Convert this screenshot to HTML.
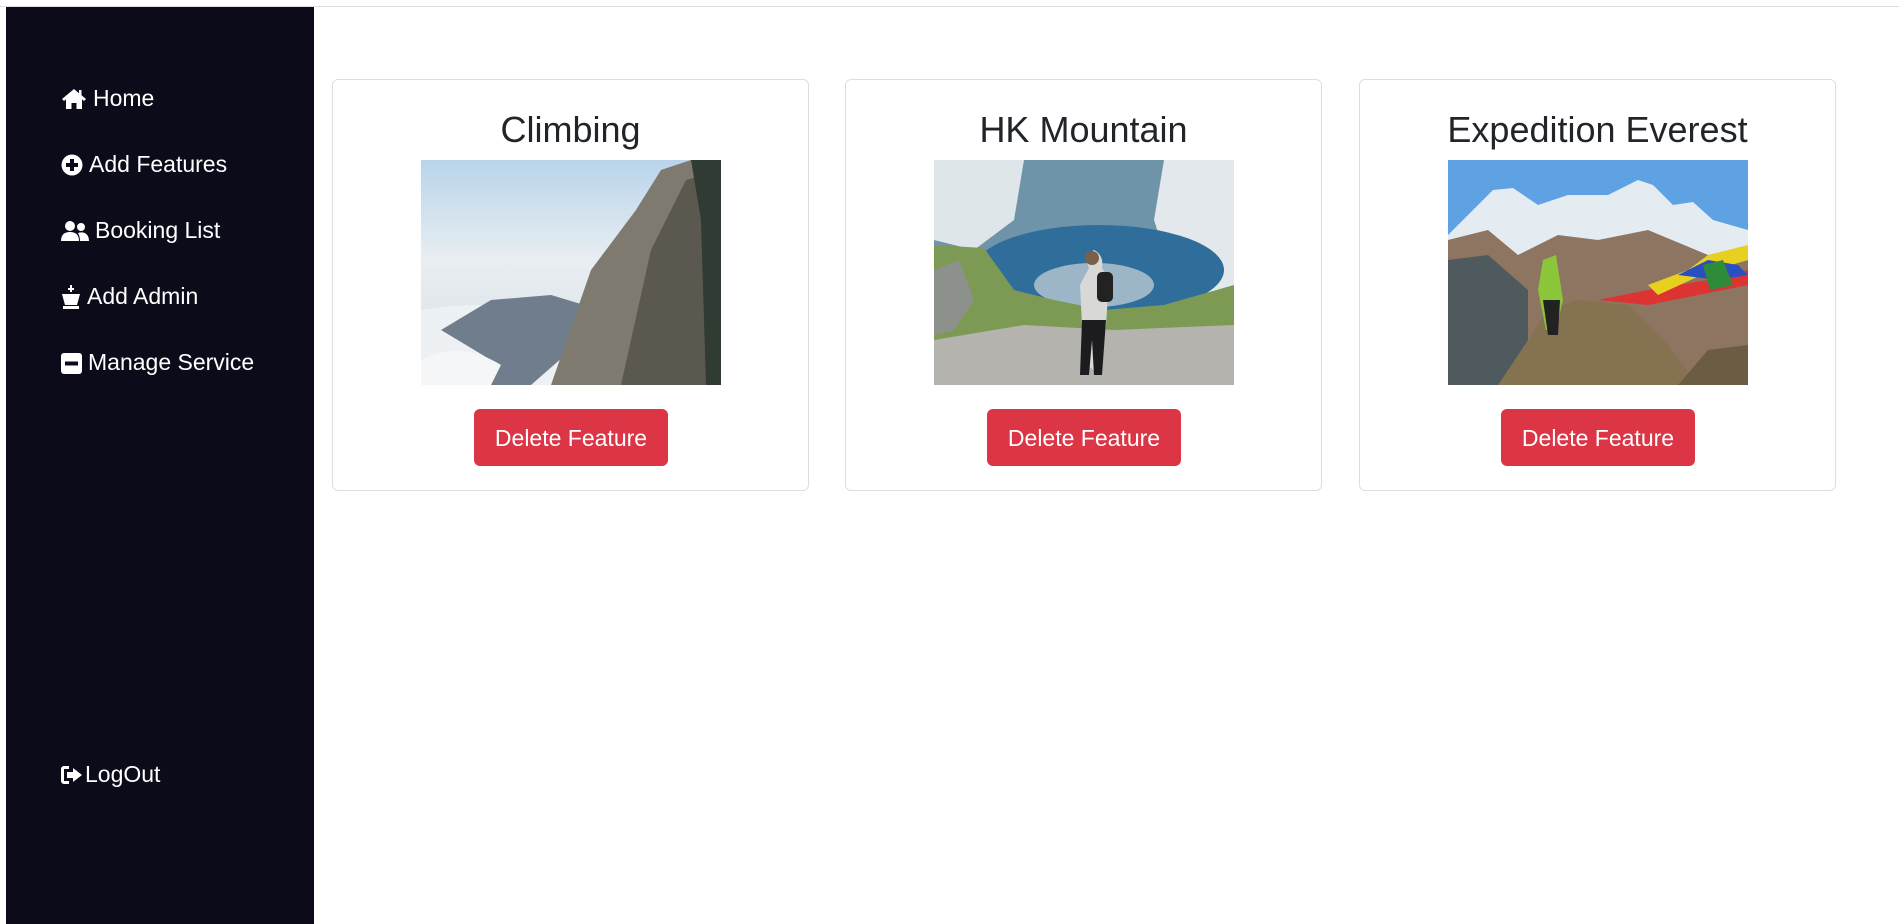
<!DOCTYPE html>
<html><head><meta charset="utf-8"><style>
*{box-sizing:border-box;margin:0;padding:0}
body{width:1899px;height:924px;background:#fff;font-family:"Segoe UI","Liberation Sans",sans-serif;position:relative;overflow:hidden}
.topline{position:absolute;left:0;top:6px;width:1899px;height:1px;background:#dcdcdc}
.side{position:absolute;left:6px;top:7px;width:308px;height:917px;background:#0b0b1a}
.nav{position:absolute;left:61px;color:#fff;font-size:23px;display:flex;align-items:center;gap:6px;white-space:nowrap}
.nav svg{fill:#fff}
.card{position:absolute;top:79px;width:477px;height:412px;border:1px solid #dedede;border-radius:6px;background:#fff}
.card h2{position:absolute;top:29px;left:0;width:100%;text-align:center;font-size:36px;font-weight:500;color:#212529;line-height:42px}
.card .img{position:absolute;left:88px;top:80px;width:300px;height:225px;overflow:hidden}
.btn{position:absolute;left:141px;top:329px;width:194px;height:57px;background:#dc3545;color:#fff;border-radius:6px;font-size:23px;display:flex;align-items:center;justify-content:center;padding-top:2px}
</style></head><body>
<div class="topline"></div>
<div class="side"></div>
<div class="nav" style="top:85px"><svg width="26" height="22" viewBox="0 0 26 22"><path d="M13 1 L1 11 L3 13 L5 11.3 V21 H10.5 V15 H15.5 V21 H21 V11.3 L23 13 L25 11 L20.5 7.3 V2 H18 V5.2 Z"/></svg>Home</div>
<div class="nav" style="top:151px"><svg width="22" height="22" viewBox="0 0 22 22"><circle cx="11" cy="11" r="10.5"/><path d="M9 5h4v4h4v4h-4v4H9v-4H5V9h4z" fill="#0b0b1a"/></svg>Add Features</div>
<div class="nav" style="top:217px"><svg width="28" height="22" viewBox="0 0 28 22"><circle cx="9" cy="6" r="5"/><circle cx="20" cy="7" r="4"/><path d="M0 21c0-6 3-9 9-9s9 3 9 9z"/><path d="M17 13c6-2 11 1 11 8h-9c0-4-1-6-2-8z"/></svg>Booking List</div>
<div class="nav" style="top:283px"><svg width="20" height="24" viewBox="0 0 20 24"><path d="M9 0h2v3h2v2h-2v2H9V5H7V3h2z"/><path d="M1 9h18l-3 11H4z"/><rect x="2" y="21" width="16" height="3"/></svg>Add Admin</div>
<div class="nav" style="top:349px"><svg width="21" height="22" viewBox="0 0 21 22"><rect x="0" y="1" width="21" height="21" rx="3"/><rect x="4" y="9.5" width="13" height="4" fill="#0b0b1a"/></svg>Manage Service</div>
<div class="nav" style="top:761px;gap:1px"><svg width="23" height="20" viewBox="0 0 23 20"><path d="M8 1H3a3 3 0 0 0-3 3v12a3 3 0 0 0 3 3h5v-3H3V4h5z"/><path d="M12 3l9 7-9 7v-4H6V7h6z"/></svg>LogOut</div>

<div class="card" style="left:332px"><h2>Climbing</h2><div class="img"><svg width="300" height="225" viewBox="0 0 300 225">
<defs><linearGradient id="s1" x1="0" y1="0" x2="0" y2="1"><stop offset="0" stop-color="#b9d4ea"/><stop offset=".45" stop-color="#e9eef2"/><stop offset="1" stop-color="#d6dde3"/></linearGradient></defs>
<rect width="300" height="225" fill="url(#s1)"/>
<path d="M0 150 Q60 140 120 150 T300 150 V225 H0Z" fill="#eef1f4"/>
<path d="M20 170 L70 140 L130 135 L180 150 L150 190 L110 225 H60 L70 200 Z" fill="#6f7d8c"/>
<path d="M0 200 Q40 180 80 205 L70 225 H0Z" fill="#f4f6f8"/>
<path d="M130 225 L170 110 L215 50 L240 10 L270 0 H300 V225Z" fill="#7e7a70"/>
<path d="M200 225 L230 90 L265 20 L300 10 V225Z" fill="#5a584f"/>
<path d="M270 0 L300 0 V225 L285 225 L280 60Z" fill="#2f3b33"/>
</svg></div><div class="btn">Delete Feature</div></div>

<div class="card" style="left:845px"><h2>HK Mountain</h2><div class="img"><svg width="300" height="225" viewBox="0 0 300 225">
<rect width="300" height="225" fill="#6f93a8"/>
<path d="M0 0 H90 L80 60 L40 90 L0 80Z" fill="#dfe6ea"/>
<path d="M230 0 H300 V150 L240 120 L220 60Z" fill="#e3e8ec"/>
<ellipse cx="165" cy="110" rx="125" ry="45" fill="#2f6e9a"/>
<ellipse cx="160" cy="125" rx="60" ry="22" fill="#9cb6c8"/>
<path d="M0 85 L50 88 L80 130 L120 140 L170 150 L230 145 L300 125 V225 H0Z" fill="#7d9a55"/>
<path d="M0 180 L90 165 L180 170 L300 165 V225 H0Z" fill="#b5b3ae"/>
<path d="M0 110 L25 100 L40 140 L20 170 L0 175Z" fill="#8c918c"/>
<path d="M155 108 Q150 95 160 90 Q170 95 168 108 L175 120 L172 165 L165 205 L160 210 L152 205 L148 165 L146 125Z" fill="#d8d8d6"/>
<path d="M148 160 L172 160 L168 215 L160 215 L158 180 L155 215 L146 215Z" fill="#1c1c1e"/>
<rect x="163" y="112" width="16" height="30" rx="5" fill="#222"/>
<circle cx="158" cy="98" r="7" fill="#7a5f4a"/>
</svg></div><div class="btn">Delete Feature</div></div>

<div class="card" style="left:1359px"><h2>Expedition Everest</h2><div class="img"><svg width="300" height="225" viewBox="0 0 300 225">
<rect width="300" height="225" fill="#5ea2e4"/>
<path d="M0 75 L25 50 L45 30 L65 28 L90 45 L120 35 L160 35 L190 20 L205 25 L225 45 L245 42 L265 60 L300 70 V225 H0Z" fill="#e4ebf1"/>
<path d="M0 80 L40 70 L70 95 L110 75 L150 80 L200 70 L260 95 L300 90 V225 H0Z" fill="#8d7562"/>
<path d="M0 100 L40 95 L80 130 L80 225 H0Z" fill="#4f5a5e"/>
<path d="M50 225 L100 150 L130 140 L180 145 L220 185 L250 225Z" fill="#857250"/>
<path d="M230 225 L260 190 L300 185 V225Z" fill="#6a5d44"/>
<path d="M150 140 L200 130 L260 120 L300 110 L300 125 L250 135 L200 145Z" fill="#d33"/>
<path d="M200 125 L240 110 L260 95 L280 90 L300 85 V100 L260 112 L210 135Z" fill="#e8d020"/>
<path d="M230 115 L260 100 L290 105 L300 115 L270 120Z" fill="#2a4fc0"/>
<path d="M255 105 L275 100 L285 125 L262 130Z" fill="#2e8b3a"/>
<path d="M95 100 L108 95 L115 140 L108 170 L98 170 L90 130Z" fill="#8bc53a"/>
<path d="M95 140 L112 140 L110 175 L100 175Z" fill="#222"/>
</svg></div><div class="btn">Delete Feature</div></div>
</body></html>
